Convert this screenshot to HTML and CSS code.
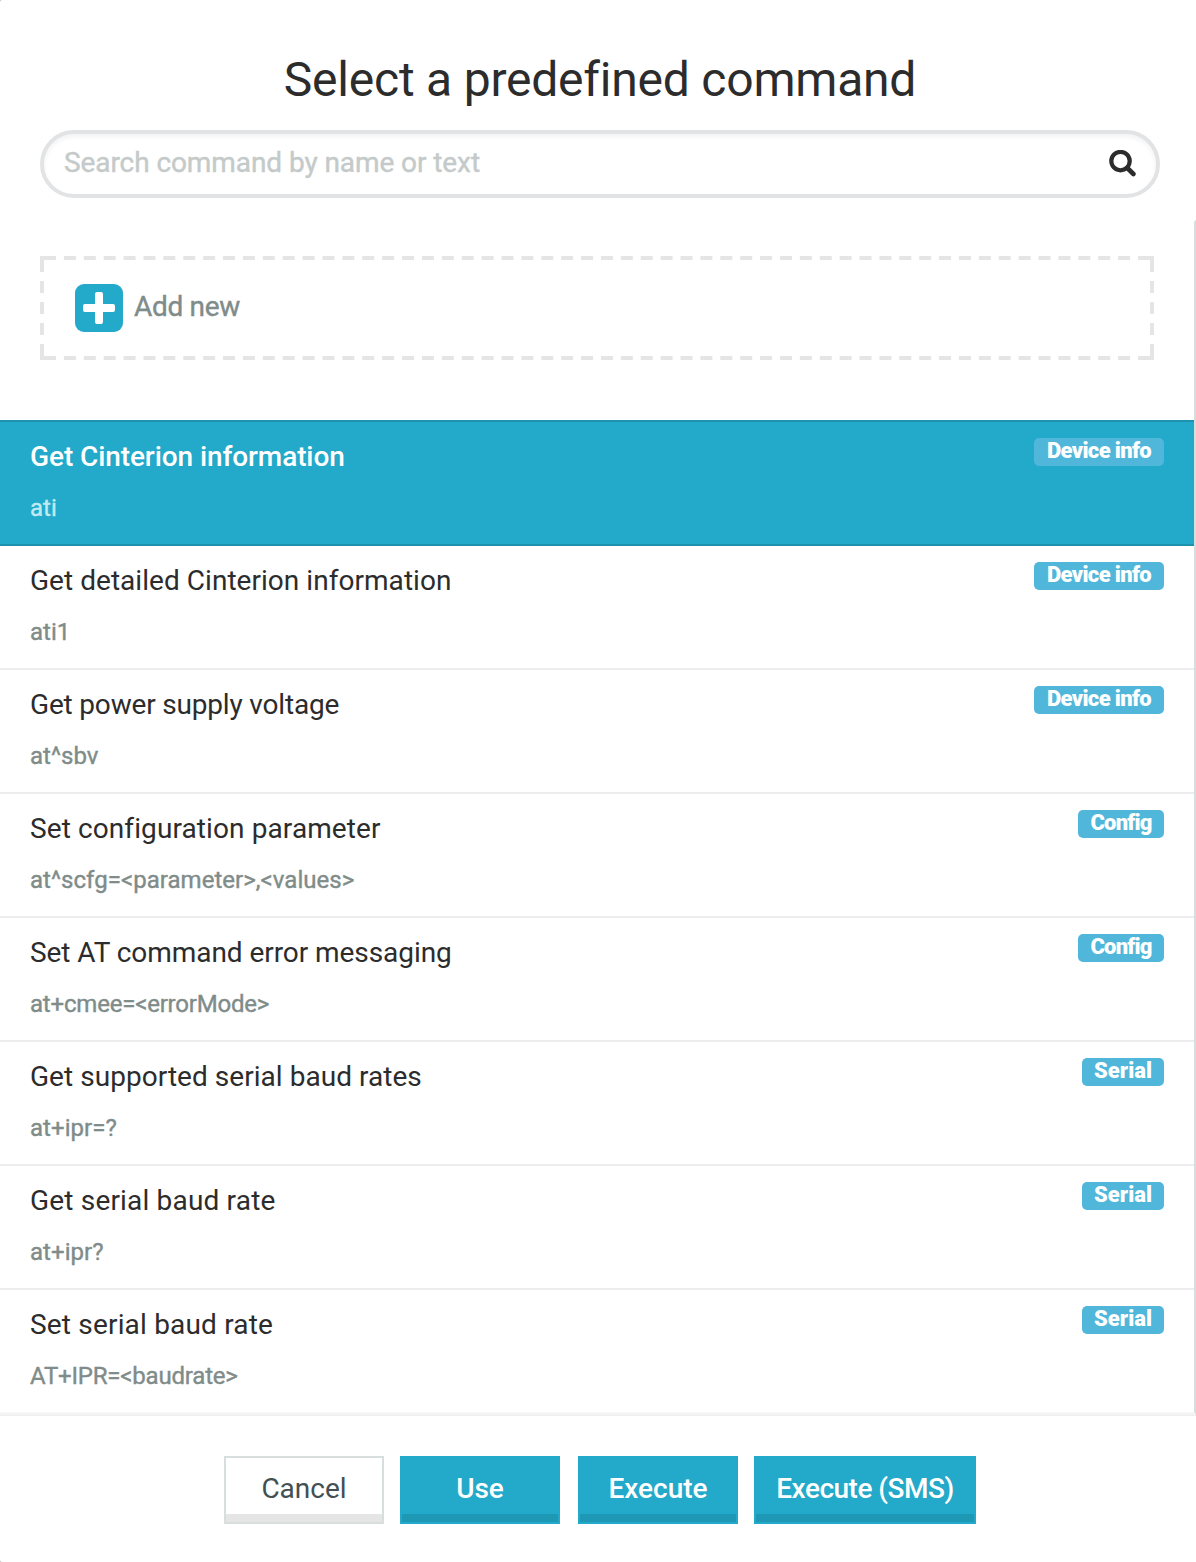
FILE: index.html
```html
<!DOCTYPE html>
<html lang="en">
<head>
<meta charset="utf-8">
<title>Select a predefined command</title>
<link rel="stylesheet" href="styles.css">
</head>
<body>
<div class="modal">
  <header class="header">
    <h1 class="title">Select a predefined command</h1>
    <div class="search">
      <span class="placeholder">Search command by name or text</span>
      <svg class="search-icon" width="28" height="28" viewBox="0 0 28 28" fill="none" stroke="#2c2c2c" stroke-width="4.2"><circle cx="12.5" cy="11.1" r="9.2"/><path d="M19.4 18L25.4 24" stroke-width="4.6" stroke-linecap="round"/></svg>
    </div>
  </header>
  <div class="body">
    <div class="list">
      <div class="add-wrap">
        <div class="add">
          <svg class="dashes" width="1114" height="104" stroke="#e5e5e5" stroke-width="4" fill="none">
            <path d="M4 2H1110M4 102H1110" stroke-dasharray="12 7.891"/>
            <path d="M2 4V100M1112 4V100" stroke-dasharray="12 9"/>
            <path d="M0 2H4M1110 2H1114M0 102H4M1110 102H1114"/>
          </svg>
          <svg width="48" height="48" viewBox="0 0 48 48"><rect width="48" height="48" rx="9" fill="#23a9c9"/><path d="M22 8h4q2 0 2 2v10h10q2 0 2 2v4q0 2-2 2H28v10q0 2-2 2h-4q-2 0-2-2V28H10q-2 0-2-2v-4q0-2 2-2h10V10q0-2 2-2z" fill="#fff"/></svg>
          <span class="add-label">Add new</span>
        </div>
      </div>
      <div class="row selected"><div class="info"><div class="name">Get Cinterion information</div><div class="code">ati</div></div><span class="badge device">Device info</span></div>
      <div class="row"><div class="info"><div class="name">Get detailed Cinterion information</div><div class="code">ati1</div></div><span class="badge device">Device info</span></div>
      <div class="row"><div class="info"><div class="name tight">Get power supply voltage</div><div class="code">at^sbv</div></div><span class="badge device">Device info</span></div>
      <div class="row"><div class="info"><div class="name roomy">Set configuration parameter</div><div class="code">at^scfg=&lt;parameter&gt;,&lt;values&gt;</div></div><span class="badge config">Config</span></div>
      <div class="row"><div class="info"><div class="name snug">Set AT command error messaging</div><div class="code tight">at+cmee=&lt;errorMode&gt;</div></div><span class="badge config">Config</span></div>
      <div class="row"><div class="info"><div class="name">Get supported serial baud rates</div><div class="code">at+ipr=?</div></div><span class="badge serial">Serial</span></div>
      <div class="row"><div class="info"><div class="name loose">Get serial baud rate</div><div class="code">at+ipr?</div></div><span class="badge serial">Serial</span></div>
      <div class="row last"><div class="info"><div class="name loose">Set serial baud rate</div><div class="code tight">AT+IPR=&lt;baudrate&gt;</div></div><span class="badge serial">Serial</span></div>
    </div>
    <div class="scrollbar"></div>
  </div>
  <footer class="footer">
    <div class="btn cancel"><span>Cancel</span></div>
    <div class="btn"><span>Use</span></div>
    <div class="btn execute"><span>Execute</span></div>
    <div class="btn sms"><span>Execute (SMS)</span></div>
  </footer>
</div>
</body>
</html>
```
FILE: styles.css
```css
* { box-sizing: border-box; }
html, body { margin: 0; overflow: hidden; }
body { background: #b4b6b6; font-family: Roboto, "Liberation Sans", sans-serif; color: #2c2c2c; }
.modal { width: 1200px; height: 1562px; display: flex; flex-direction: column; background: #fff; border-radius: 2px; white-space: nowrap; }
.header { height: 220px; padding: 50px 40px 0; flex: none; }
.title { margin: 0; height: 80px; line-height: 60px; font-size: 48px; font-weight: 400; text-align: center; letter-spacing: -.22px; }
.search { height: 68px; border: 4px solid #e1e3e5; border-radius: 34px; box-shadow: inset 0 3px 5px rgba(0,0,0,.05); display: flex; align-items: center; justify-content: space-between; padding: 0 20px 4px; }
.placeholder { font-size: 28px; color: #c4cac9; letter-spacing: -.08px; }
.placeholder, .add-label, .code { -webkit-text-stroke: .4px currentColor; }
.search-icon { margin-top: 4px; }
.body { height: 1196px; display: flex; flex: none; border-bottom: 2px solid #f0f0f0; }
.list { width: 1194px; }
.scrollbar { width: 6px; height: 1194px; background: #d8dddd; border-radius: 3px; }
.add-wrap { height: 200px; padding: 36px 40px 0; }
.add { position: relative; width: 1114px; height: 104px; padding: 0 35px; display: flex; align-items: center; gap: 11px; }
.dashes { position: absolute; left: 0; top: 0; }
.add-label { font-size: 28px; line-height: 32px; margin-bottom: 2px; color: #7f8c8a; letter-spacing: -.3px; }
.row { height: 124px; padding: 16px 30px 0; display: flex; justify-content: space-between; align-items: flex-start; border-bottom: 2px solid #ecedee; }
.info { padding-top: 1px; }
.name { font-size: 28px; line-height: 36px; height: 51px; letter-spacing: .04px; }
.name.tight { letter-spacing: -.18px; }
.name.snug { letter-spacing: -.06px; }
.name.roomy { letter-spacing: .1px; }
.name.loose { letter-spacing: .18px; }
.code { font-size: 24px; line-height: 36px; color: #7f8c8a; letter-spacing: .04px; }
.code.tight { letter-spacing: -.2px; }
.row.selected { height: 126px; background: #23a9c9; border-top: 2px solid #1f92ad; border-bottom-color: #1f92ad; color: #fff; }
.selected .name { font-weight: 500; letter-spacing: -.09px; }
.selected .code { color: #c0eaf4; }
.row.last { border-bottom-color: #f6f6f6; }
.badge { height: 28px; border-radius: 5px; background: #50b7da; color: #fff; font-size: 22px; font-weight: 900; line-height: 26px; text-align: center; }
.device { width: 130px; letter-spacing: -.65px; }
.config { width: 86px; letter-spacing: -.8px; }
.serial { width: 82px; letter-spacing: 0; }
.footer { display: flex; padding: 40px 0 0 224px; }
.btn { width: 160px; height: 68px; margin-right: 16px; border: 2px solid #23a9c9; background: #23a9c9; box-shadow: inset 0 -8px #1f98b5; color: #fff; font-size: 28px; font-weight: 500; line-height: 62px; text-align: center; }
.btn.cancel { background: #fff; border-color: #d8dddd; box-shadow: inset 0 -8px #e5e5e5; color: #425052; font-weight: 400; }
.btn.execute { margin-left: 2px; }
.btn.sms { width: 222px; margin-right: 0; letter-spacing: -.5px; }
```
